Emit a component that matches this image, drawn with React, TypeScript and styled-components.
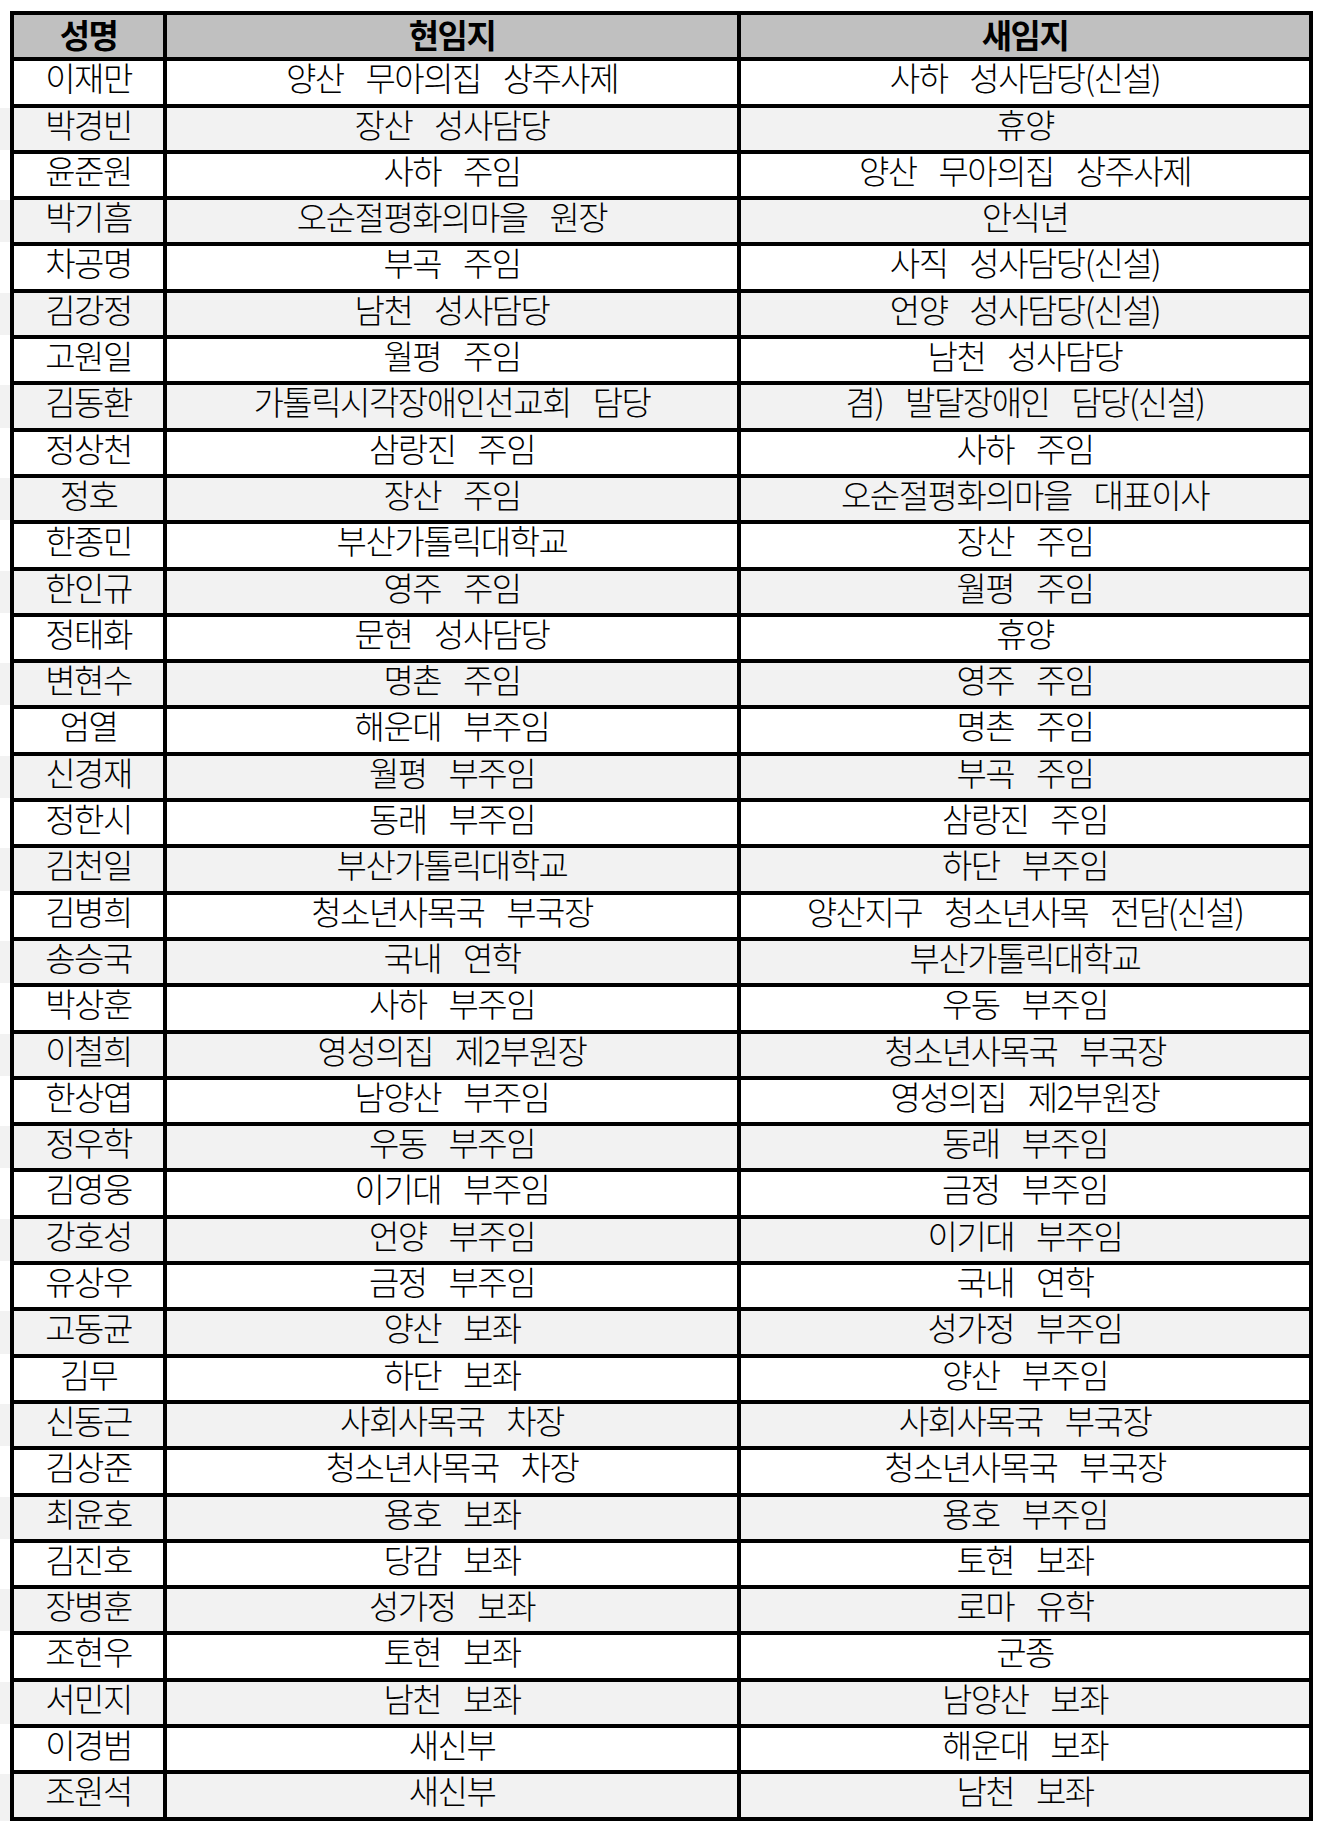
import styled, { createGlobalStyle } from "styled-components";

const GlobalStyle = createGlobalStyle`
  html, body {
    margin: 0;
    padding: 0;
    background: #ffffff;
  }
  body {
    font-family: "Noto Sans CJK KR", "Noto Sans", sans-serif;
    color: #000000;
  }
`;

const Page = styled.div`
  width: 1330px;
  min-height: 1835px;
  padding-top: 11px;
  box-sizing: border-box;
  background: #ffffff;
`;

const Table = styled.div`
  display: flex;
  flex-direction: column;
`;

const Row = styled.div<{ $last?: boolean }>`
  display: grid;
  grid-template-columns: 10px 153px 574px 576px;
  height: ${(p) => (p.$last ? "50.31px" : "46.31px")};
`;

// the shaded band of every other row runs on past the left border
const Stub = styled.div<{ $bg: string }>`
  border-top: 4px solid transparent;
  background: ${(p) => p.$bg};
  background-clip: padding-box;
`;

const Cell = styled.div<{ $bg: string; $edge?: boolean; $last?: boolean; $head?: boolean }>`
  box-sizing: border-box;
  border-top: 4px solid #000;
  border-left: 4px solid #000;
  border-right: ${(p) => (p.$edge ? "4px solid #000" : "none")};
  border-bottom: ${(p) => (p.$last ? "4px solid #000" : "none")};
  background: ${(p) => p.$bg};
  display: flex;
  justify-content: center;
  align-items: flex-start;
  padding-top: ${(p) => (p.$head ? "3px" : "0px")};
  font-size: 33px;
  line-height: 32px;
  font-weight: ${(p) => (p.$head ? 700 : 300)};
  letter-spacing: -1.5px;
  word-spacing: 16px;
  white-space: nowrap;
`;

type Entry = [string, string, string];

const rows: Entry[] = [
  ["이재만", "양산 무아의집 상주사제", "사하 성사담당(신설)"],
  ["박경빈", "장산 성사담당", "휴양"],
  ["윤준원", "사하 주임", "양산 무아의집 상주사제"],
  ["박기흠", "오순절평화의마을 원장", "안식년"],
  ["차공명", "부곡 주임", "사직 성사담당(신설)"],
  ["김강정", "남천 성사담당", "언양 성사담당(신설)"],
  ["고원일", "월평 주임", "남천 성사담당"],
  ["김동환", "가톨릭시각장애인선교회 담당", "겸) 발달장애인 담당(신설)"],
  ["정상천", "삼랑진 주임", "사하 주임"],
  ["정호", "장산 주임", "오순절평화의마을 대표이사"],
  ["한종민", "부산가톨릭대학교", "장산 주임"],
  ["한인규", "영주 주임", "월평 주임"],
  ["정태화", "문현 성사담당", "휴양"],
  ["변현수", "명촌 주임", "영주 주임"],
  ["엄열", "해운대 부주임", "명촌 주임"],
  ["신경재", "월평 부주임", "부곡 주임"],
  ["정한시", "동래 부주임", "삼랑진 주임"],
  ["김천일", "부산가톨릭대학교", "하단 부주임"],
  ["김병희", "청소년사목국 부국장", "양산지구 청소년사목 전담(신설)"],
  ["송승국", "국내 연학", "부산가톨릭대학교"],
  ["박상훈", "사하 부주임", "우동 부주임"],
  ["이철희", "영성의집 제2부원장", "청소년사목국 부국장"],
  ["한상엽", "남양산 부주임", "영성의집 제2부원장"],
  ["정우학", "우동 부주임", "동래 부주임"],
  ["김영웅", "이기대 부주임", "금정 부주임"],
  ["강호성", "언양 부주임", "이기대 부주임"],
  ["유상우", "금정 부주임", "국내 연학"],
  ["고동균", "양산 보좌", "성가정 부주임"],
  ["김무", "하단 보좌", "양산 부주임"],
  ["신동근", "사회사목국 차장", "사회사목국 부국장"],
  ["김상준", "청소년사목국 차장", "청소년사목국 부국장"],
  ["최윤호", "용호 보좌", "용호 부주임"],
  ["김진호", "당감 보좌", "토현 보좌"],
  ["장병훈", "성가정 보좌", "로마 유학"],
  ["조현우", "토현 보좌", "군종"],
  ["서민지", "남천 보좌", "남양산 보좌"],
  ["이경범", "새신부", "해운대 보좌"],
  ["조원석", "새신부", "남천 보좌"],
];

const HEAD_BG = "#c0c0c0";
const SHADE_BG = "#f2f2f2";
const PLAIN_BG = "#ffffff";

export default function App() {
  return (
    <>
      <GlobalStyle />
      <Page>
        <Table>
          <Row>
            <Stub $bg={PLAIN_BG} />
            <Cell $bg={HEAD_BG} $head>성명</Cell>
            <Cell $bg={HEAD_BG} $head>현임지</Cell>
            <Cell $bg={HEAD_BG} $head $edge>새임지</Cell>
          </Row>
          {rows.map(([name, from, to], i) => {
            const bg = i % 2 === 1 ? SHADE_BG : PLAIN_BG;
            const last = i === rows.length - 1;
            return (
              <Row key={name + i} $last={last}>
                <Stub $bg={bg} />
                <Cell $bg={bg} $last={last}>{name}</Cell>
                <Cell $bg={bg} $last={last}>{from}</Cell>
                <Cell $bg={bg} $last={last} $edge>{to}</Cell>
              </Row>
            );
          })}
        </Table>
      </Page>
    </>
  );
}
